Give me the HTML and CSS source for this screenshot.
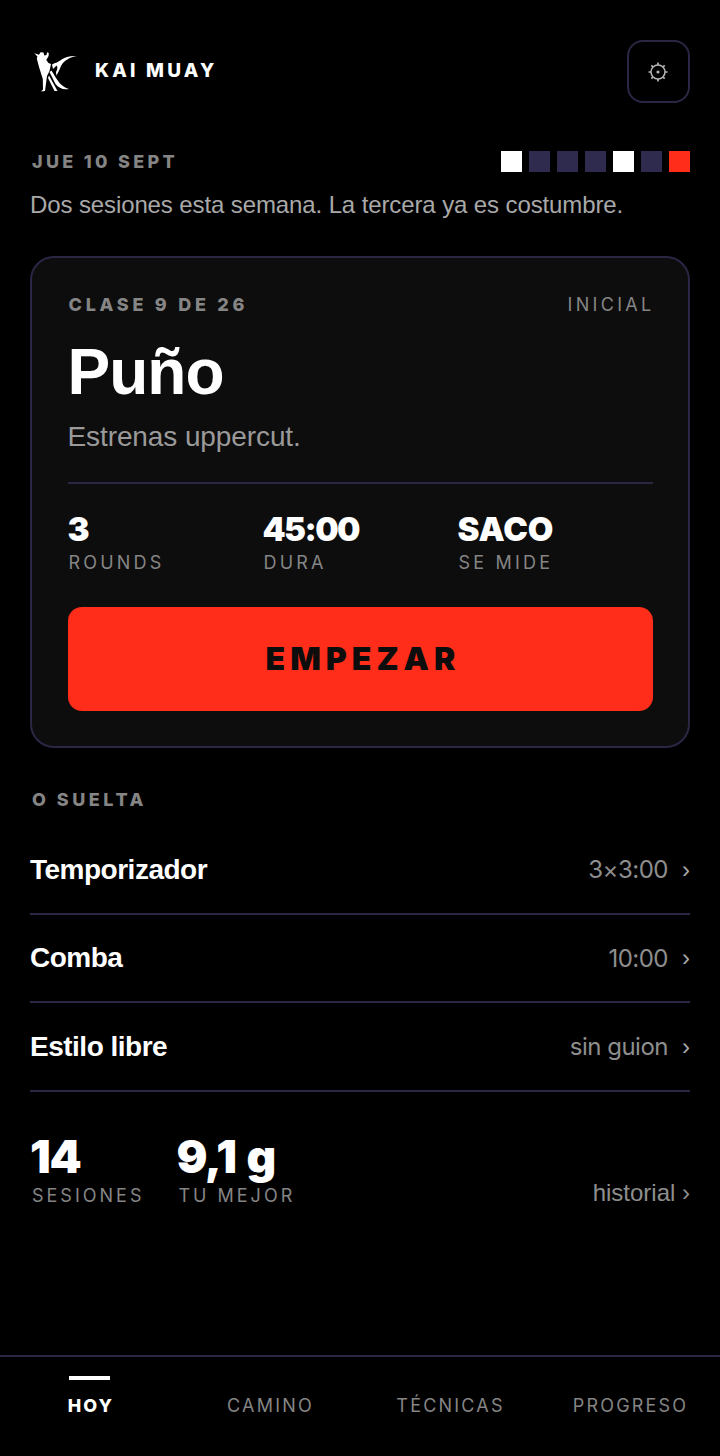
FILE: index.html
```html
<!DOCTYPE html>
<html lang="es">
<head>
    <meta charset="UTF-8">
    <meta name="viewport" content="width=device-width, initial-scale=1.0">
    <title>Kai Muay</title>
    <link rel="stylesheet" href="styles.css">
</head>
<body>
    <div class="app">
        <header class="top">
            <div class="brand">
                <svg class="brand-logo" width="44" height="42" viewBox="0 0 44 42">
                    <!-- fighter -->
                    <path fill="#fff" d="M0.3 2.3 L5 3.8 L6.5 1.2 L9.5 1.5 L10.3 4.5 L12.5 4 L13 1.2 L14.8 2 L14.6 5 L12.3 9 L14.5 12 L17 13 L15.5 20 L13 25 L11 40 L7 40.5 L9 38.5 L8.8 28 L5 16 L2.8 7.5 L3.4 5.6 Z"/>
                    <!-- kick -->
                    <path fill="#fff" d="M18 13.5 L21 12 C25 11.5 30 4 42.7 5 C36 6.5 30.5 8.5 27 15 C25.5 19 24 22 22.4 24.5 L22 21 C23.5 18 24 16 22.5 14.5 L19 18 Z"/>
                    <path fill="#fff" d="M15.5 21 L17.5 19.5 L22 27 C25 32 29 36 35 38 C29 39 24.5 37 21.5 33 Z"/>
                    <path fill="#fff" d="M14 27 L15 24.5 L23.5 40 L20.5 40 Z"/>
                </svg>
                <span class="brand-name">KAI MUAY</span>
            </div>
            <button class="gear-btn" type="button" aria-label="Ajustes">
                <svg width="22" height="22" viewBox="0 0 22 22" fill="none" stroke="#b5b5b5">
                    <circle cx="11" cy="11" r="7" stroke-width="1.5"/>
                    <circle cx="11" cy="11" r="1.6" fill="#b5b5b5" stroke="none"/>
                    <path stroke-width="1.7" d="M11 1.5v2.5M11 18v2.5M1.5 11H4M18 11h2.5M4.3 4.3L6 6M16 16l1.7 1.7M4.3 17.7L6 16M16 6l1.7-1.7"/>
                </svg>
            </button>
        </header>

        <div class="date-row">
            <span class="date label-bold">JUE 10 SEPT</span>
            <div class="week">
                <i class="day on"></i>
                <i class="day"></i>
                <i class="day"></i>
                <i class="day"></i>
                <i class="day on"></i>
                <i class="day"></i>
                <i class="day today"></i>
            </div>
        </div>
        <p class="note">Dos sesiones esta semana. La tercera ya es costumbre.</p>

        <section class="card">
            <div class="card-top">
                <span class="label-bold">CLASE 9 DE 26</span>
                <span class="level">INICIAL</span>
            </div>
            <h1 class="title">Puño</h1>
            <p class="subtitle">Estrenas uppercut.</p>
            <div class="stats">
                <div class="stat">
                    <div class="stat-num">3</div>
                    <div class="stat-label">ROUNDS</div>
                </div>
                <div class="stat">
                    <div class="stat-num tight">45:00</div>
                    <div class="stat-label">DURA</div>
                </div>
                <div class="stat">
                    <div class="stat-num">SACO</div>
                    <div class="stat-label">SE MIDE</div>
                </div>
            </div>
            <button class="start" type="button">EMPEZAR</button>
        </section>

        <div class="loose label-bold">O SUELTA</div>
        <ul class="list">
            <li class="row"><span class="row-name">Temporizador</span><span class="row-val">3×3:00</span><span class="chev">›</span></li>
            <li class="row"><span class="row-name">Comba</span><span class="row-val">10:00</span><span class="chev">›</span></li>
            <li class="row"><span class="row-name">Estilo libre</span><span class="row-val">sin guion</span><span class="chev">›</span></li>
        </ul>

        <div class="totals">
            <div class="total">
                <div class="total-num">14</div>
                <div class="total-label">SESIONES</div>
            </div>
            <div class="total">
                <div class="total-num">9,1 g</div>
                <div class="total-label">TU MEJOR</div>
            </div>
            <a class="history" href="#">historial ›</a>
        </div>
    </div>

    <nav class="nav">
        <a class="tab active" href="#">HOY</a>
        <a class="tab" href="#">CAMINO</a>
        <a class="tab" href="#">TÉCNICAS</a>
        <a class="tab" href="#">PROGRESO</a>
    </nav>
</body>
</html>
```
FILE: styles.css
```css
* {
    box-sizing: border-box;
}

html, body {
    margin: 0;
    background: #000;
}

body {
    height: 1456px;
    display: flex;
    flex-direction: column;
    font-family: "Liberation Sans", Arial, sans-serif;
    color: #fff;
    overflow: hidden;
}

.app {
    flex: 1;
    padding: 40px 30px 0;
}

.top {
    display: flex;
    justify-content: space-between;
    align-items: center;
}

.brand {
    display: flex;
    align-items: center;
    gap: 17px;
    padding-left: 4px;
}

.brand-name {
    margin-top: -2px;
    font-family: Inter, sans-serif;
    font-weight: 800;
    font-size: 19px;
    letter-spacing: 3.2px;
}

.gear-btn {
    width: 63px;
    height: 63px;
    display: flex;
    align-items: center;
    justify-content: center;
    background: none;
    border: 2px solid #2a2745;
    border-radius: 16px;
    padding: 0 1px 0 0;
}

.label-bold {
    font-family: Inter, sans-serif;
    font-weight: 800;
    font-size: 18px;
    letter-spacing: 3.75px;
    color: #858585;
}

.date-row {
    display: flex;
    justify-content: space-between;
    align-items: center;
    margin-top: 48px;
    padding-left: 2px;
}

.date {
    letter-spacing: 3.3px;
}

.week {
    display: flex;
    gap: 7px;
}

.day {
    width: 21px;
    height: 21px;
    background: #2e2b4e;
}

.day.on {
    background: #fff;
}

.day.today {
    background: #ff2d1a;
}

.note {
    margin: 18px 0 0;
    font-size: 24px;
    line-height: 30px;
    letter-spacing: -0.11px;
    color: #a9a9a9;
}

.card {
    margin-top: 36px;
    height: 492px;
    padding: 36px 35.5px 0;
    background: #0d0d0d;
    border: 2px solid #2a2745;
    border-radius: 24px;
}

.card-top {
    display: flex;
    justify-content: space-between;
    align-items: center;
    padding: 0 0 0 1px;
}

.level {
    margin-right: -2px;
    font-family: Inter, sans-serif;
    font-size: 18px;
    letter-spacing: 3.3px;
    color: #858585;
}

.title {
    margin: 19px 0 0;
    font-size: 64px;
    line-height: 76px;
    font-weight: 700;
    letter-spacing: -1px;
}

.subtitle {
    margin: 9px 0 0;
    font-size: 28px;
    line-height: 36px;
    letter-spacing: -0.1px;
    color: #9a9a9a;
}

.stats {
    display: grid;
    grid-template-columns: repeat(3, 1fr);
    margin-top: 27px;
    padding-top: 26px;
    border-top: 2px solid #2a2745;
}

.stat-num {
    font-family: Inter, sans-serif;
    font-weight: 900;
    font-size: 33px;
    line-height: 38px;
}

.stat-num.tight {
    letter-spacing: -1.6px;
}

.stat-label {
    margin-top: 4px;
    padding-left: 1px;
    font-family: Inter, sans-serif;
    font-size: 18px;
    line-height: 22px;
    letter-spacing: 3.2px;
    color: #858585;
}

.start {
    display: block;
    width: 100%;
    height: 104px;
    margin-top: 33px;
    padding: 0 0 2px 6px;
    background: #ff2d1a;
    border: 0;
    border-radius: 14px;
    font-family: Inter, sans-serif;
    font-weight: 900;
    font-size: 32px;
    letter-spacing: 5px;
    color: #0d0d0d;
}

.loose {
    margin-top: 41px;
    padding-left: 2px;
    letter-spacing: 3.5px;
}

.list {
    list-style: none;
    margin: 16px 0 0;
    padding: 0;
}

.row {
    display: flex;
    align-items: center;
    height: 88.5px;
    padding-top: 1px;
    border-bottom: 2px solid #2a2745;
}

.row-name {
    flex: 1;
    font-size: 28px;
    font-weight: 700;
    letter-spacing: -0.5px;
}

.row-val {
    font-family: Inter, sans-serif;
    font-size: 24px;
    letter-spacing: -0.5px;
    color: #8e8e8e;
}

.chev {
    width: 22px;
    text-align: right;
    font-size: 24px;
    color: #a9a9a9;
}

.totals {
    display: flex;
    gap: 32px;
    margin-top: 36px;
}

.total-num {
    font-family: Inter, sans-serif;
    font-weight: 900;
    font-size: 46px;
    line-height: 56px;
    letter-spacing: -1.3px;
    word-spacing: 3px;
}

.total-label {
    margin-top: 1px;
    padding-left: 2px;
    font-family: Inter, sans-serif;
    font-size: 18px;
    line-height: 22px;
    letter-spacing: 3px;
    color: #858585;
}

.history {
    margin-left: auto;
    align-self: flex-end;
    font-size: 24px;
    line-height: 28px;
    color: #8e8e8e;
    text-decoration: none;
}

.nav {
    display: grid;
    grid-template-columns: repeat(4, 1fr);
    height: 101px;
    border-top: 2px solid #2a2745;
}

.tab {
    padding: 38px 0 0 1px;
    text-align: center;
    font-family: Inter, sans-serif;
    font-size: 18px;
    line-height: 22px;
    letter-spacing: 2.2px;
    color: #858585;
    text-decoration: none;
}

.tab.active {
    position: relative;
    padding-left: 2px;
    font-weight: 800;
    color: #fff;
}

.tab.active::before {
    content: "";
    position: absolute;
    top: 19px;
    left: 69px;
    width: 41px;
    height: 4px;
    background: #fff;
}
```
